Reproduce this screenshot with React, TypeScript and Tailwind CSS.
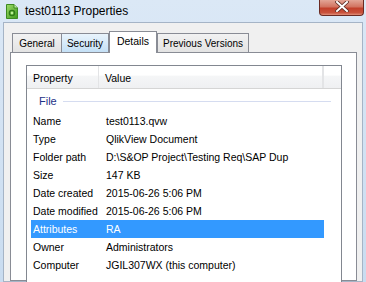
import React from "react";

const rows: [string, string][] = [
  ["Name", "test0113.qvw"],
  ["Type", "QlikView Document"],
  ["Folder path", "D:\\S&OP Project\\Testing Req\\SAP Dup"],
  ["Size", "147 KB"],
  ["Date created", "2015-06-26 5:06 PM"],
  ["Date modified", "2015-06-26 5:06 PM"],
  ["Attributes", "RA"],
  ["Owner", "Administrators"],
  ["Computer", "JGIL307WX (this computer)"],
];

function FileIcon() {
  return (
    <svg width="12" height="15" viewBox="0 0 12 15">
      <defs>
        <linearGradient id="g1" x1="0" y1="0" x2="1" y2="1">
          <stop offset="0" stopColor="#9fdc6a" />
          <stop offset="1" stopColor="#3f9a1e" />
        </linearGradient>
      </defs>
      <path d="M0.5 0.5 H8 L11.5 4 V14.5 H0.5 Z" fill="url(#g1)" stroke="#3d8a22" />
      <path d="M8 0.5 V4 H11.5" fill="#c8efa8" stroke="#3d8a22" />
      <circle cx="6" cy="9" r="2.6" fill="none" stroke="#2f7a18" strokeWidth="1.4" />
      <circle cx="6" cy="9" r="1.2" fill="#bff09a" />
    </svg>
  );
}

function CloseButton() {
  return (
    <div className="absolute right-[2px] top-0 h-[16px] w-[45px] rounded-b-[4px] border border-t-0 border-[#6b2a22] bg-[linear-gradient(to_bottom,#e3a596_0%,#d27461_45%,#c2402b_55%,#c9523c_85%,#e0917c_100%)] flex items-start justify-center">
      <svg width="14" height="11" viewBox="0 0 14 11" className="mt-[1px]">
        <path d="M2 1 L12 10 M12 1 L2 10" stroke="#5a2a22" strokeWidth="3.6" strokeLinecap="square" />
        <path d="M2 1 L12 10 M12 1 L2 10" stroke="#ffffff" strokeWidth="2" strokeLinecap="square" />
      </svg>
    </div>
  );
}

export default function App() {
  const font = { fontFamily: '"Liberation Sans", Arial, sans-serif' };
  return (
    <div
      className="relative w-[366px] h-[282px] overflow-hidden bg-[linear-gradient(to_bottom,#dbe8f6,#c9dcf0)] flex flex-col"
      style={font}
    >
      {/* title bar */}
      <div className="h-[22px] flex items-center shrink-0">
        <div className="ml-[6px] mt-[1px] flex items-center">
          <FileIcon />
        </div>
        <span className="ml-[7px] text-[12px] text-black leading-none">test0113 Properties</span>
      </div>
      <CloseButton />

      {/* window body */}
      <div className="flex-1 ml-[3px] mr-[3px] border border-[#a5b4c6] bg-[#f0f0f0] pl-[6px] pr-[5px] pt-[8px] flex flex-col min-h-0">
        {/* tabs */}
        <div className="flex items-end pl-[2px] h-[22px] text-[10px] text-black relative z-10 -mb-px">
          <div className="h-[20px] w-[49px] border border-r-0 border-[#898c95] bg-[linear-gradient(to_bottom,#f2f2f2,#e3e3e3)] flex items-center justify-center">
            General
          </div>
          <div className="h-[20px] w-[48px] border border-[#898c95] bg-[linear-gradient(to_bottom,#e9f4fc,#c4e0f6)] flex items-center justify-center">
            Security
          </div>
          <div className="h-[22px] w-[48px] border border-b-0 border-[#898c95] bg-white flex items-center justify-center pb-[2px] text-[10.5px]">
            Details
          </div>
          <div className="h-[20px] w-[92px] border border-[#898c95] bg-[linear-gradient(to_bottom,#f2f2f2,#e3e3e3)] flex items-center justify-center">
            Previous Versions
          </div>
        </div>

        {/* tab panel */}
        <div className="flex-1 border border-[#898c95] bg-white pl-[15px] pr-[14px] pt-[12px] min-h-0">
          <div className="h-[240px] border border-[#828790] bg-white text-[10.5px] text-black">
            {/* header */}
            <div className="h-[23px] flex border-b border-[#d5d5d5] bg-[linear-gradient(to_bottom,#ffffff_0%,#ffffff_42%,#f5f6f7_45%,#eff0f2_100%)]">
              <div className="w-[72px] flex items-center pl-[6px] pt-[3px] border-r border-[#e3e4e6]">Property</div>
              <div className="w-[225px] flex items-center pl-[6px] pt-[3px] border-r-2 border-[#e3e4e6]">Value</div>
              <div className="flex-1" />
            </div>
            {/* group */}
            <div className="h-[23px] flex items-center pl-[12px] pr-[10px] pt-[1px]">
              <span className="text-[#1e3287] text-[11px]">File</span>
              <div className="flex-1 h-px bg-[#d5dcf0] ml-[6px] mt-[1px]" />
            </div>
            {/* rows */}
            <div className="pl-[4px] pr-[17px]">
              {rows.map(([k, v]) => {
                const sel = k === "Attributes";
                return (
                  <div
                    key={k}
                    className={
                      sel
                        ? "h-[18px] flex items-center pt-[1px] bg-[#3399ff] text-white"
                        : "h-[18px] flex items-center pt-[1px]"
                    }
                  >
                    <div className="w-[75px] pl-[2px] whitespace-nowrap">{k}</div>
                    <div className="whitespace-nowrap">{v}</div>
                  </div>
                );
              })}
            </div>
          </div>
        </div>
      </div>
    </div>
  );
}
